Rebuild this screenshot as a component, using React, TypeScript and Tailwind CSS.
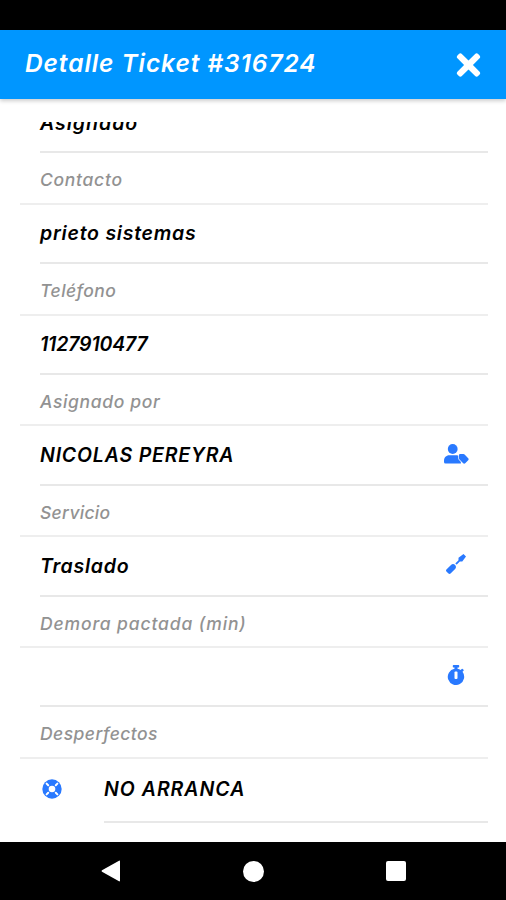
import type { ReactNode } from 'react';
import { FaScrewdriver, FaTimes } from 'react-icons/fa';

interface Field {
  label: string;
  labelClass: string;
  value: string;
  valueClass: string;
  icon?: ReactNode;
}

function UserTagIcon() {
  return (
    <svg className="w-[25px] h-5 shrink-0" viewBox="0 0 25 20" fill="currentColor">
      <circle cx="8.7" cy="5" r="4.9" />
      <path d="M5.2 11.2h7.6c1.700 0 3.200.8 4.100 2v6.300H1.500A1.500 1.500 0 0 1 0 18v-1.600c0-2.900 2.300-5.200 5.200-5.200Z" />
      <path
        d="M16.300 10h3.100c.5 0 .9.200 1.200.5l3.600 3.700c.6.600.6 1.400 0 2l-3 3c-.6.600-1.400.600-2 0l-3.700-3.700c-.3-.3-.5-.7-.5-1.200v-3c0-.8.500-1.300 1.300-1.300Z"
        stroke="white"
        strokeWidth="1.400"
        paintOrder="stroke"
      />
    </svg>
  );
}

function StopwatchIcon() {
  return (
    <svg className="w-5 h-5" viewBox="0 0 20 20" fill="currentColor">
      <path d="M7.500 0h5q.7 0 .7.700v1.100q0 .7-.7.700h-1v1.200a8.200 8.200 0 0 1 3.200 1.300l1-1q.5-.5 1 0l.8.800q.5.500 0 1l-1 1A8.200 8.200 0 1 1 8.500 3.700V2.500h-1q-.7 0-.7-.7V.7q0-.7.700-.7Z" />
      <rect x="8.500" y="6.500" width="3" height="7.500" rx="0.900" fill="white" />
    </svg>
  );
}

function LifeRingIcon() {
  return (
    <svg className="w-5 h-5" viewBox="0 0 20 20" fill="currentColor">
      <circle cx="10" cy="10" r="9.700" />
      <circle cx="10" cy="10" r="3.300" fill="white" />
      <path
        d="M4.600 4.600 6.200 6.200M15.400 4.600 13.800 6.200M4.600 15.400 6.200 13.800M15.400 15.400 13.800 13.800"
        stroke="white"
        strokeWidth="2"
        strokeLinecap="round"
      />
    </svg>
  );
}

const fields: Field[] = [
  {
    label: 'Contacto',
    labelClass: 'tracking-[0.7px]',
    value: 'prieto sistemas',
    valueClass: 'tracking-[0.75px]',
  },
  {
    label: 'Teléfono',
    labelClass: 'tracking-[0.45px]',
    value: '1127910477',
    valueClass: 'tracking-[-0.15px]',
  },
  {
    label: 'Asignado por',
    labelClass: 'tracking-[0.65px]',
    value: 'NICOLAS PEREYRA',
    valueClass: 'tracking-[0.82px]',
    icon: <UserTagIcon />,
  },
  {
    label: 'Servicio',
    labelClass: 'tracking-[0.3px]',
    value: 'Traslado',
    valueClass: 'tracking-[0.75px]',
    icon: <FaScrewdriver className="w-5 h-5" />,
  },
  {
    label: 'Demora pactada (min)',
    labelClass: 'tracking-[0.88px]',
    value: '',
    valueClass: '',
    icon: <StopwatchIcon />,
  },
];

function FieldLabel({ text, className }: { text: string; className: string }) {
  return (
    <div className="h-[51.4px] ml-5 pl-5 pt-[5px] flex items-center border-b-2 border-[#eeeeee]">
      <span className={`text-[17.5px] font-medium text-[#929292] whitespace-nowrap ${className}`}>{text}</span>
    </div>
  );
}

function FieldValue({ text, className, icon }: { text: string; className: string; icon?: ReactNode }) {
  return (
    <div className="h-[59.4px] ml-10 pr-5 flex items-center justify-between border-b-2 border-[#e8e8e8]">
      <span className={`pt-px text-[19.5px] font-[570] text-black whitespace-nowrap ${className}`}>{text}</span>
      {icon && <span className="w-6 pb-[3px] flex justify-center text-[#2979ff]">{icon}</span>}
    </div>
  );
}

export default function App() {
  return (
    <div className="w-full h-[900px] flex flex-col overflow-hidden bg-white italic font-['Inter','Open_Sans',sans-serif] [font-feature-settings:'cv11','ss03']">
      <div className="h-[30px] shrink-0 bg-black" />

      <header className="h-[69px] shrink-0 pl-[25px] pr-[24px] flex items-center justify-between bg-[#0096ff] text-white shadow-[0_2px_4px_rgba(0,0,0,0.2)]">
        <h1 className="pb-0.5 text-[24.5px] font-semibold whitespace-nowrap tracking-[0.92px]">Detalle Ticket #316724</h1>
        <button aria-label="Cerrar">
          <FaTimes className="w-[27px] h-[34px]" />
        </button>
      </header>

      <main className="mt-[23px] flex-1 min-h-0 overflow-hidden pr-[18px]">
        {/* list is scrolled, the first row is partly hidden */}
        <div className="-mt-[28px]">
          <FieldValue text="Asignado" className="tracking-[1px]" />
          {fields.map((f) => (
            <section key={f.label}>
              <FieldLabel text={f.label} className={f.labelClass} />
              <FieldValue text={f.value} className={f.valueClass} icon={f.icon} />
            </section>
          ))}

          <FieldLabel text="Desperfectos" className="tracking-[0.45px]" />
          <div className="flex items-center">
            <span className="ml-[42px] mb-1 text-[#2979ff]">
              <LifeRingIcon />
            </span>
            <div className="ml-[42px] h-[64px] flex-1 flex items-center border-b-2 border-[#e8e8e8]">
              <span className="pb-px text-[19.5px] font-[570] text-black tracking-[1px]">NO ARRANCA</span>
            </div>
          </div>
        </div>
      </main>

      {/* Android navigation bar */}
      <nav className="h-[58px] shrink-0 bg-black flex items-center justify-between pl-[101px] pr-[100px]">
        <svg className="w-5 h-[22px]" viewBox="0 0 20 22" fill="white">
          <path d="M1 10.2 18 .7Q19 .3 19 1.4v19.2q0 1.1-1 .7L1 11.8Q0 11 1 10.2Z" />
        </svg>
        <span className="w-[21px] h-[21px] rounded-full bg-white" />
        <span className="w-5 h-5 rounded-[2px] bg-white" />
      </nav>
    </div>
  );
}
